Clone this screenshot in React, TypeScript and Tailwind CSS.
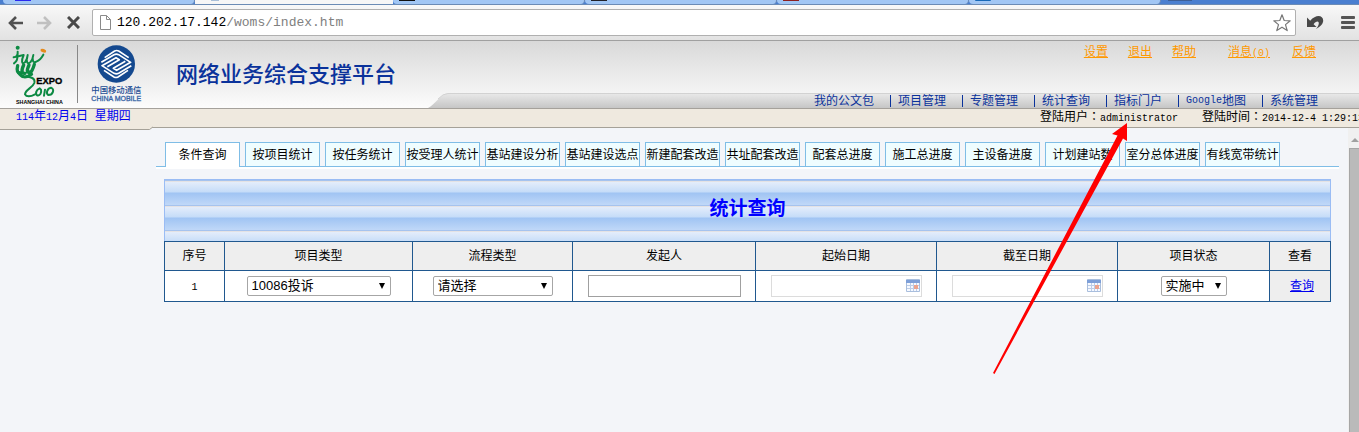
import React from "react";

const navItems = ["我的公文包", "项目管理", "专题管理", "统计查询", "指标门户", "Google地图", "系统管理"];

const tabs = [
  "条件查询",
  "按项目统计",
  "按任务统计",
  "按受理人统计",
  "基站建设分析",
  "基站建设选点",
  "新建配套改造",
  "共址配套改造",
  "配套总进度",
  "施工总进度",
  "主设备进度",
  "计划建站数",
  "室分总体进度",
  "有线宽带统计",
];

const columns = [
  { label: "序号", width: "w-[60px]" },
  { label: "项目类型", width: "w-[188px]" },
  { label: "流程类型", width: "w-[160px]" },
  { label: "发起人", width: "w-[183px]" },
  { label: "起始日期", width: "w-[181px]" },
  { label: "截至日期", width: "w-[181px]" },
  { label: "项目状态", width: "w-[152px]" },
  { label: "查看", width: "w-[61px]" },
];

const browserTabs = [
  "bg-[#2a2af0]",
  "",
  "bg-[#101010]",
  "bg-[#202028]",
  "bg-[#8c1f1f]",
  "rounded-b-full bg-[#1668b8]",
];

function Mono({ children }: { children: React.ReactNode }) {
  return <span className="font-['Liberation_Mono',monospace] text-[10px]">{children}</span>;
}

function Colon() {
  return <span className="font-['Noto_Sans_CJK_TC',sans-serif]" lang="zh-TW">：</span>;
}

function BrowserTabs() {
  return (
    <div className="flex h-[5px] overflow-hidden border-b border-[#6b8bb5] bg-[#4a7fd0] pl-[3px]" aria-hidden="true">
      {browserTabs.map((icon, i) =>
        i === 1 ? (
          <div key={i} className="h-[5px] w-[198px] shrink-0 bg-[#f6f6f6] pl-4">
            <div className="h-px w-2 bg-[#a9bfd8]" />
          </div>
        ) : (
          <div
            key={i}
            className="h-1 w-48 shrink-0 rounded-b-sm border-r border-[#6b8bb5] bg-[#a1c6f4] pl-[6px] first:pl-3"
          >
            <div className={`h-px w-4 ${icon}`} />
          </div>
        ),
      )}
      <div className="ml-[7px] h-px w-6 bg-[#3d5f96]" />
    </div>
  );
}

function Toolbar() {
  return (
    <div className="flex h-9 items-center border-b border-[#a0a0a0] bg-linear-to-b from-[#f8f8f8] to-[#e2e2e2] pr-1 pl-2">
      <button aria-label="后退">
        <svg width="15" height="14" viewBox="0 0 15 14" fill="none" stroke="#505050" strokeWidth="2.6">
          <path d="M15 7H2M8 1L2 7l6 6" />
        </svg>
      </button>
      <button aria-label="前进" className="ml-[14px]">
        <svg width="15" height="14" viewBox="0 0 15 14" fill="none" stroke="#c0c0c0" strokeWidth="2.6">
          <path d="M0 7h13M7 1l6 6-6 6" />
        </svg>
      </button>
      <button aria-label="停止" className="ml-[15px]">
        <svg width="13" height="13" viewBox="0 0 13 13" stroke="#484848" strokeWidth="3">
          <path d="M1 1l11 11M12 1L1 12" />
        </svg>
      </button>
      <div className="ml-3 flex h-[27px] min-w-0 flex-1 items-center rounded-xs border border-[#b0b0b0] bg-white pr-1 pl-[7px]">
        <svg width="11" height="15" viewBox="0 0 11 15" fill="#fff" stroke="#8a8a8a">
          <path d="M.5.5h6l4 4v10H.5zM6.5.5v4h4" />
        </svg>
        <a
          href="#address"
          className="ml-[6px] flex-1 font-['Liberation_Mono',monospace] text-[13px] leading-5 whitespace-nowrap text-[#808080]"
        >
          <span className="text-black">120.202.17.142</span>/woms/index.htm
        </a>
        <button aria-label="收藏">
          <svg width="18" height="18" viewBox="0 0 18 18" fill="#fff" stroke="#777" strokeWidth="1.2" strokeLinejoin="round">
            <path d="M9 .8l2.2 5.7 6 .3-4.7 3.8 1.7 6L9 13.200l-5.200 3.400 1.700-6L.8 6.800l6-.3z" />
          </svg>
        </button>
      </div>
      <button aria-label="撤销" className="ml-[10px]">
        <svg width="18" height="15" viewBox="0 0 18 15">
          <path d="M1 2.500v9.500h9.500L7.600 9.200C9.300 6.700 12 5.600 12.700 7.400c.5 1.800-.6 4.200-2.700 6.600 4.800-2.200 7.200-5.400 7.200-8.400C17-.2 9.800-.8 4.200 5.700z" fill="#484848" />
        </svg>
      </button>
      <button aria-label="菜单" className="ml-[17px]">
        <svg width="14" height="14" viewBox="0 0 14 14" fill="#555">
          <rect width="14" height="3" rx="1" />
          <rect y="5" width="14" height="3" rx="1" />
          <rect y="10" width="14" height="3" rx="1" />
        </svg>
      </button>
    </div>
  );
}

function ExpoLogo() {
  return (
    <svg width="70" height="66" viewBox="0 0 210 198" role="img" aria-label="EXPO 2010 SHANGHAI CHINA">
      <g fill="none" stroke="#0d8a43" strokeLinecap="round" strokeLinejoin="round">
        <path d="M38 32C39 42 36 48 26 49M38 36C37 52 38 60 27 67" strokeWidth="6" />
        <path d="M40 46L56 42C48 60 50 72 60 64C66 56 68 48 68 42C62 60 66 72 76 64C82 56 84 50 85 42C80 56 84 68 94 62C104 58 110 50 115 41" strokeWidth="6" />
        <path d="M38 74C34 90 38 97 46 96M56 72C48 90 50 98 60 97M72 72C64 90 66 96 74 93M88 70C84 84 80 92 74 98" strokeWidth="10" />
        <path d="M40 94C50 110 62 112 80 100" strokeWidth="9" />
        <path d="M54 108C74 106 92 110 88 126C82 142 62 144 60 160C64 168 76 168 90 160" strokeWidth="6" />
        <path d="M104 142C94 146 90 158 96 163C106 166 110 154 108 146zM120 146L117 164M138 140C126 142 122 158 130 162C144 162 150 144 138 140z" strokeWidth="6" />
      </g>
      <circle cx="38" cy="20" r="6" fill="#0d8a43" />
      <ellipse cx="115" cy="29" rx="9" ry="5" fill="#e58a1c" transform="rotate(20 115 29)" />
      <text x="94" y="130" fontSize="28" fontWeight="900" stroke="#000" strokeWidth="1">EXPO</text>
      <text x="33" y="188" fontSize="16" fontWeight="700">SHANGHAI CHINA</text>
    </svg>
  );
}

function ChinaMobileLogo() {
  return (
    <svg width="56" height="66" viewBox="0 0 168 198" role="img" aria-label="中国移动通信 CHINA MOBILE">
      <circle cx="85" cy="69" r="56" fill="#14498f" />
      <g fill="none" stroke="#fff" strokeWidth="5" strokeLinejoin="round">
        <path d="M50 50L80 30Q86 27 92 30L122 50" />
        <path d="M40 64L78 41Q85 38 92 41L128 64L86 88L76 82L112 61" />
        <path d="M130 74L92 97Q85 100 78 97L42 74L84 50L94 56L58 77" />
        <path d="M120 88L90 108Q84 111 78 108L48 88" />
      </g>
      <text x="10" y="155" fontSize="25" fill="#1c4c94" fontWeight="500" className="font-['Noto_Sans_CJK_SC',sans-serif]">中国移动通信</text>
      <text x="10" y="179" fontSize="21" fill="#3c68a8" stroke="#3c68a8">CHINA MOBILE</text>
    </svg>
  );
}

function Header() {
  return (
    <header className="relative flex h-[68px] border-b border-[#a5a19b] bg-linear-to-b from-[#d9d9d9] to-[#fcfcfc] pl-[5px]">
      <ExpoLogo />
      <div className="mt-1 ml-[2px] h-[58px] w-px bg-[#888]" />
      <div className="ml-[10px]">
        <ChinaMobileLogo />
      </div>
      <h1 className="ml-8 py-4 text-[22px] leading-9 font-medium whitespace-nowrap text-[#0a329b]">网络业务综合支撑平台</h1>
      <div className="ml-8 flex min-w-0 flex-1 flex-col justify-between">
        <div className="flex justify-end pt-[2px] pr-[43px] leading-[18px] whitespace-nowrap text-[#ff9900] underline">
          <a href="#settings">设置</a>
          <a href="#logout" className="ml-5">退出</a>
          <a href="#help" className="ml-5">帮助</a>
          <a href="#messages" className="ml-8">消息<Mono>(0)</Mono></a>
          <a href="#feedback" className="ml-[22px]">反馈</a>
        </div>
        <div className="flex h-[15px]">
          <svg width="22" height="15" viewBox="0 0 22 15" className="shrink-0">
            <defs>
              <linearGradient id="slope" x1="0" y1="0" x2="0" y2="1">
                <stop offset="0" stopColor="#e8e8e8" />
                <stop offset="1" stopColor="#c6c6c6" />
              </linearGradient>
            </defs>
            <path d="M0 15C8 11 12 1 20 0h2v15z" fill="url(#slope)" />
            <path d="M10 6Q15 .5 20 .5h2" fill="none" stroke="#d2d2d2" />
          </svg>
          <nav className="flex min-w-0 flex-1 items-center justify-end border-t border-[#d2d2d2] bg-linear-to-b from-[#e8e8e8] to-[#c6c6c6] pr-[41px] text-[#0a329b]">
            {navItems.map((item) => (
              <a
                key={item}
                href="#nav"
                className="mr-4 flex h-3 items-center border-l border-[#0a329b] pl-[7px] leading-3 whitespace-nowrap first:border-l-0 last:mr-0"
              >
                {item === "Google地图" ? (
                  <>
                    <Mono>Google</Mono>地图
                  </>
                ) : (
                  item
                )}
              </a>
            ))}
          </nav>
        </div>
      </div>
    </header>
  );
}

function StatusBar() {
  return (
    <div className="relative flex h-[19px] justify-between border-b border-[#a5a198] bg-[#efe9df] leading-[14px] whitespace-nowrap">
      <div className="pl-4 text-[#0000f0]">
        <Mono>114</Mono>年<Mono>12</Mono>月<Mono>4</Mono>日 &nbsp;星期四
      </div>
      <div className="flex w-[319px] overflow-hidden text-black">
        <span className="w-[162px] shrink-0">登陆用户<Colon /><Mono>administrator</Mono></span>
        <span>登陆时间<Colon /><Mono>2014-12-4 1:29:13</Mono></span>
      </div>
      <svg width="154" height="5" viewBox="0 0 154 5" className="absolute top-[17px] left-0">
        <path d="M0 0h154L149 4H0z" fill="#efe9df" />
        <path d="M0 3.500h149.500L153 .9" fill="none" stroke="#a5a198" />
      </svg>
    </div>
  );
}

function Dropdown({ label, value, width }: { label: string; value: string; width: string }) {
  return (
    <span className={`relative inline-block align-middle ${width}`}>
      <select
        aria-label={label}
        className="block h-5 w-full appearance-none rounded-xs border border-[#a6a6a6] bg-white pl-1 text-[13px] leading-4 text-black"
      >
        <option>{value}</option>
      </select>
      <svg width="8" height="6" viewBox="0 0 8 6" className="pointer-events-none absolute top-[7px] right-[5px]">
        <path d="M1 0h6L4 6z" />
      </svg>
    </span>
  );
}

function DateField({ label }: { label: string }) {
  return (
    <span className="relative inline-block w-[151px] align-middle">
      <input aria-label={label} className="block h-[22px] w-full border border-[#dcdcdc] bg-white px-1 text-xs" />
      <svg width="14" height="14" viewBox="0 0 14 14" className="pointer-events-none absolute top-1 right-[2px]">
        <rect width="14" height="13" rx="1" fill="#a9bedd" />
        <rect y="1" width="14" height="3" fill="#7d9fd8" />
        <path d="M1 4h12v8H1z" fill="#f6f9ff" />
        <path d="M1 6.500h12M1 9.500h12M4.500 4v8M7.500 4v8M10.500 4v8" stroke="#bccde8" />
        <rect x="8" y="6" width="4" height="4" fill="#eba38e" />
      </svg>
    </span>
  );
}

function QueryTable() {
  const cell = "h-[31px] border border-[#20588f] p-0 text-center";
  return (
    <div className="mt-[10px] mr-2 ml-2">
      <h2 className="flex h-[62px] items-center justify-center border border-b-0 border-[#9abcf4] bg-[repeating-linear-gradient(to_bottom,#a6c3ee_0px,#a6c3ee_1px,#e4e2e4_1px,#e4e2e4_2px,#e4edfb_2px,#c5dcf8_12px,#a0c4f3_13px,#c0d8f8_25px)] pb-1 text-[19px] leading-6 font-bold text-[#0000ff]">
        统计查询
      </h2>
      <table className="w-full table-fixed border-collapse bg-white text-black">
        <thead>
          <tr>
            {columns.map((c) => (
              <th key={c.label} className={`h-[29px] border border-[#20588f] bg-[#eeeeee] p-0 font-normal ${c.width}`}>
                {c.label}
              </th>
            ))}
          </tr>
        </thead>
        <tbody>
          <tr>
            <td className={cell}><Mono>1</Mono></td>
            <td className={cell}><Dropdown label="项目类型" value="10086投诉" width="w-36" /></td>
            <td className={cell}><Dropdown label="流程类型" value="请选择" width="w-[120px]" /></td>
            <td className={cell}>
              <input aria-label="发起人" className="h-[22px] w-[153px] border border-[#a0a0a0] bg-white px-1 align-middle text-xs" />
            </td>
            <td className={cell}><DateField label="起始日期" /></td>
            <td className={cell}><DateField label="截至日期" /></td>
            <td className={cell}><Dropdown label="项目状态" value="实施中" width="w-[66px]" /></td>
            <td className={`${cell} bg-[#eeeeee]`}>
              <a href="#query" className="pl-1 text-[#0000ee] underline">查询</a>
            </td>
          </tr>
        </tbody>
      </table>
    </div>
  );
}

export default function App() {
  return (
    <div className="relative flex min-h-screen flex-col overflow-hidden bg-[#f3f5f9] font-['Liberation_Sans','Noto_Sans_CJK_SC',sans-serif] text-xs">
      <BrowserTabs />
      <Toolbar />
      <Header />
      <StatusBar />
      <div className="flex flex-1">
        <main className="min-w-0 flex-1 pt-[14px] pr-[9px] pl-[156px]">
          <div className="flex gap-[5px] border-b-2 border-white pl-[9px] shadow-[inset_0_-1px_0_#7fbde6]">
            {tabs.map((t, i) => (
              <button
                key={t}
                className={
                  i === 0
                    ? "h-[25px] w-[75px] shrink-0 border border-b-0 border-[#7fbde6] bg-white whitespace-nowrap"
                    : "h-[25px] w-[75px] shrink-0 border border-[#7fbde6] bg-[#effdff] whitespace-nowrap"
                }
              >
                {t}
              </button>
            ))}
          </div>
          <QueryTable />
        </main>
        <div className="flex w-[11px] flex-col bg-[#f0f0f0] pt-2" aria-hidden="true">
          <svg width="11" height="12" viewBox="0 0 11 12">
            <path d="M3 6L7 2l4 4z" fill="#a0a0a0" />
          </svg>
          <div className="ml-px flex-1 border-t border-l border-[#a6a6a6] bg-[#bababa]" />
        </div>
      </div>
      <svg width="134" height="251" viewBox="0 0 134 251" className="pointer-events-none absolute top-[123px] right-[232px]">
        <path d="M134 0v18l-4-2.500L1.500 251 0 250 124.500 12.500 119 11z" fill="#ff0000" />
      </svg>
    </div>
  );
}
